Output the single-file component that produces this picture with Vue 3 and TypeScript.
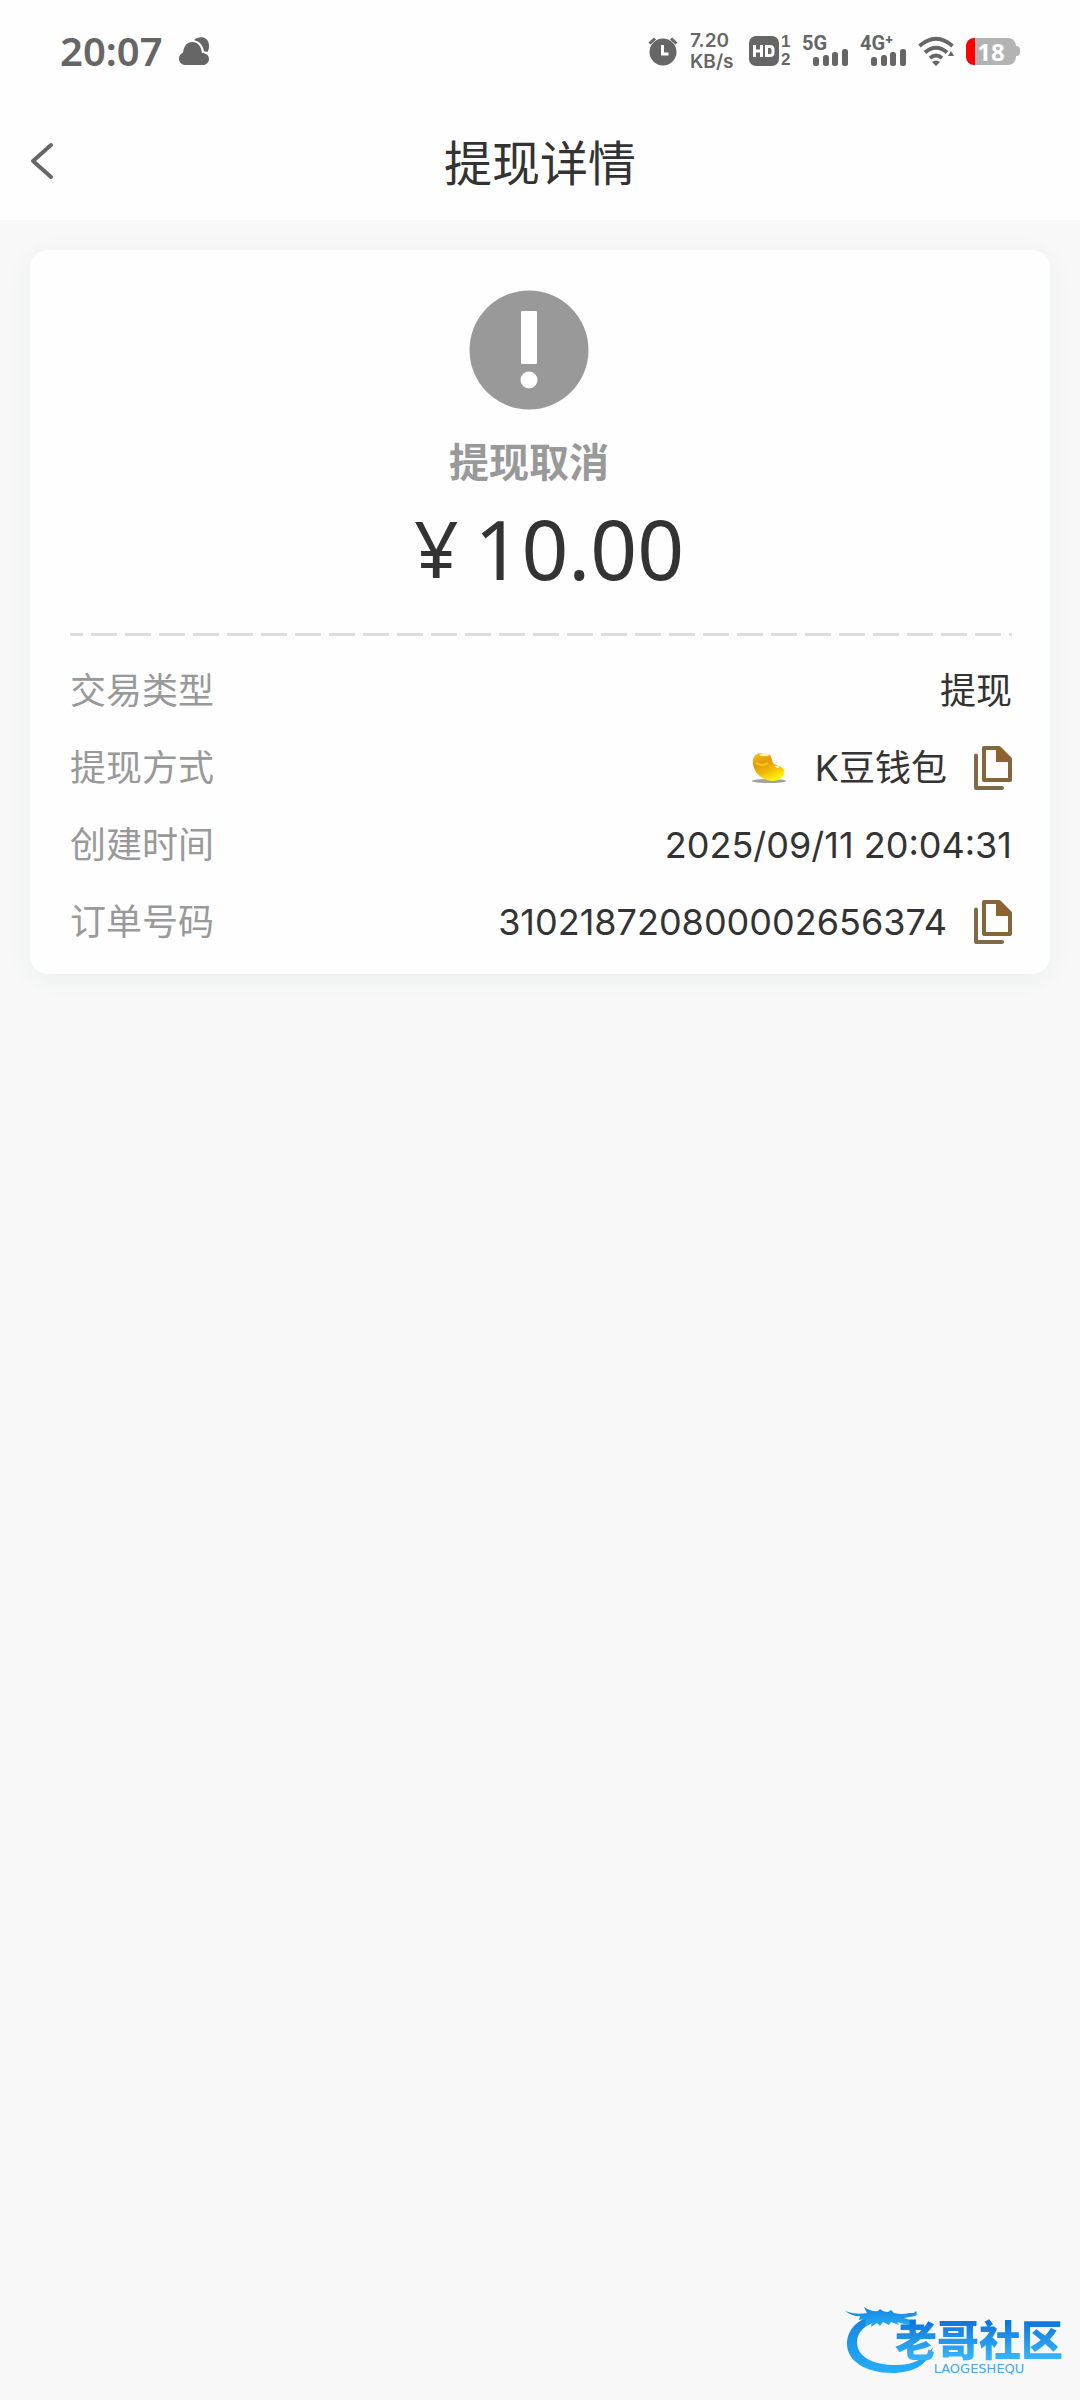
<script setup lang="ts">
import { ref } from 'vue'

interface DetailRow {
  label: string
  value: string
  coin?: boolean
  copy?: boolean
}

const rows: DetailRow[] = [
  { label: '交易类型', value: '提现' },
  { label: '提现方式', value: 'K豆钱包', coin: true, copy: true },
  { label: '创建时间', value: '2025/09/11 20:04:31' },
  { label: '订单号码', value: '310218720800002656374', copy: true },
]

const networks = ref(['5G', '4G⁺'])

function copyValue(value: string) {
  navigator.clipboard?.writeText(value)
}

function goBack() {
  window.history.back()
}
</script>

<template>
  <div class="page">
    <header class="top">
      <div class="status">
        <div class="status-left">
          <span class="clock">20:07</span>
          <svg class="cloud" viewBox="0 0 30 28" aria-hidden="true">
            <path d="M6 28a6 6 0 0 1-6-6.500c0-3 1.500-4.500 4-6C5 9 8 5 13.500 5S22 9 23 16c4 0 7 2.500 7 6s-3 6-6 6z" />
            <path d="M15 3c5-4.500 15-4 15 6 0 2.500-.500 4-1.500 6l-3.500-.700C24 8 20.500 4.500 15 3z" />
          </svg>
        </div>
        <div class="status-right">
          <svg class="alarm" viewBox="0 0 30 30" aria-hidden="true">
            <circle cx="15" cy="16" r="13.500" />
            <path d="M1.500 7.500 7 2.500M28.500 7.500 23 2.500" stroke="#666" stroke-width="3" />
            <path d="M14.500 9v9h6" fill="none" stroke="#fff" stroke-width="3" />
          </svg>
          <span class="speed"><span>7.20</span><span>KB/s</span></span>
          <span class="volte">
            <svg class="hd" viewBox="0 0 30 30" aria-hidden="true">
              <rect width="30" height="30" rx="7" />
              <path d="M5.500 9v12M12.500 9v12M5.500 15h7M17.500 10.500h3.500q3 0 3 3v3q0 3-3 3h-3.500z" fill="none" stroke="#fff" stroke-width="3" />
            </svg>
            <span class="sims"><span>1</span><span>2</span></span>
          </span>
          <span v-for="name in networks" :key="name" class="network">
            <span class="network-name">{{ name }}</span>
            <svg class="bars" viewBox="0 0 35 17" aria-hidden="true">
              <rect x="0" y="8" width="6" height="9" rx="2.500" />
              <rect x="10" y="6" width="6" height="11" rx="2.500" />
              <rect x="19" y="3" width="6" height="14" rx="2.500" />
              <rect x="29" y="0" width="6" height="17" rx="2.500" />
            </svg>
          </span>
          <svg class="wifi" viewBox="0 0 36 30" aria-hidden="true">
            <g fill="none" stroke="#666" stroke-width="4">
              <path d="M1.500 10Q18-4.500 34.500 10" />
              <path d="M7 16.500Q18 7 29 16.500" />
              <path d="M12 22q6-5 12 0" />
            </g>
            <path d="M14 26q4-3 8 0l-4 4zM33 15l3 5h-6z" />
          </svg>
          <span class="battery"><span class="battery-level">18</span></span>
        </div>
      </div>
      <div class="nav">
        <button class="back" type="button" aria-label="返回" @click="goBack">
          <svg viewBox="0 0 24 38" aria-hidden="true">
            <path d="M21 3 3 19l18 16" fill="none" stroke="#666" stroke-width="4" stroke-linecap="round" stroke-linejoin="round" />
          </svg>
        </button>
        <h1>提现详情</h1>
      </div>
    </header>

    <main class="card">
      <section class="summary">
        <svg class="notice" viewBox="0 0 120 120" aria-hidden="true">
          <circle cx="60" cy="60" r="59.500" fill="#999" />
          <rect x="52" y="21" width="16" height="53" rx="1" fill="#fff" />
          <circle cx="60" cy="90" r="8.500" fill="#fff" />
        </svg>
        <p class="state">提现取消</p>
      </section>
      <p class="amount"><span class="yen">¥</span><span>10.00</span></p>
      <div class="divider"></div>
      <dl class="details">
        <div v-for="row in rows" :key="row.label" class="row">
          <dt>{{ row.label }}</dt>
          <dd>
            <svg v-if="row.coin" class="coin" viewBox="0 0 36 32" aria-hidden="true">
              <defs>
                <linearGradient id="bean" x1="0" y1="0" x2="0.500" y2="1">
                  <stop offset="0" stop-color="#f5c21a" />
                  <stop offset="0.400" stop-color="#e39a06" />
                  <stop offset="0.700" stop-color="#f2b708" />
                  <stop offset="1" stop-color="#fff000" />
                </linearGradient>
              </defs>
              <ellipse cx="18" cy="29" rx="17" ry="2" fill="#a0a0a0" />
              <path d="M2 12C1 5 5 1 11 1c7 0 9 2 10 7 1 4 3 5 7 6 6 2 7 7 3 11-4 5-13 5-19 1C6 23 3 18 2 12z" fill="url(#bean)" />
              <path d="M8 3q3 2 6 1 3 1 4-1-2-2-5-2-3 0-5 2zM23 14l3 2 3-1q-3-2-6-1z" fill="#fff6b8" />
              <path d="M5 11q6 4 12 0" fill="none" stroke="#f7c52a" stroke-width="2" />
            </svg>
            <span class="value">{{ row.value }}</span>
            <button v-if="row.copy" class="copy" type="button" :aria-label="'复制' + row.label" @click="copyValue(row.value)">
              <svg viewBox="0 0 38 44" aria-hidden="true">
                <path d="M2 9.500V42H28" fill="none" stroke="#806a48" stroke-width="4" stroke-linejoin="round" stroke-linecap="round" />
                <path d="M10 2h15l11 11v21H10z" fill="none" stroke="#85663b" stroke-width="4" stroke-linejoin="round" />
                <path d="M22 2h4l10 11v3H22z" fill="#8f632f" />
              </svg>
            </button>
          </dd>
        </div>
      </dl>
    </main>

    <footer class="brand">
      <svg class="dragon" viewBox="0 0 90 70" aria-hidden="true">
        <defs>
          <linearGradient id="dragon-fill" x1="0" y1="0" x2="0" y2="1">
            <stop offset="0" stop-color="#1583dc" />
            <stop offset="1" stop-color="#24aefb" />
          </linearGradient>
        </defs>
        <g fill="url(#dragon-fill)">
          <path d="M30 10C12 14 2 25 2 39c0 17 19 29 45 29 22 0 37-9 41-26-8 12-20 18-37 18-23 0-39-8-39-23 0-10 8-18 24-22z" />
          <path d="M0 6q10 4 22 2L19 2q7 5 14 4l2-2q3 3 8 3l3-2 3 3q8 2 15 0h5l2-2q2 4-1 5l-11 2 10 3-2 4-8-1-7-2 2 3-8-3-2 3-6-3-3 4-3-3-6 4 1-5-7 4 1-7-7 1 1-4Q8 12 0 6z" />
        </g>
      </svg>
      <div class="brand-text">
        <span class="brand-name">老哥社区</span>
        <span class="brand-latin">LAOGESHEQU</span>
      </div>
    </footer>
  </div>
</template>

<style>
body {
  background: #f8f8f8;
}
</style>

<style scoped>
.page {
  display: flex;
  flex-direction: column;
  min-height: 100vh;
  background: #f8f8f8;
  color: #333;
  font-family: "Noto Sans", "Noto Sans CJK SC", sans-serif;
}

svg {
  display: block;
  flex: none;
}

button {
  display: block;
  padding: 0;
  border: 0;
  background: none;
  cursor: pointer;
}

.top {
  height: 220px;
  background: #fefefe;
}

.status {
  display: flex;
  justify-content: space-between;
  align-items: center;
  height: 102px;
  padding: 0 60px;
  color: #666;
  fill: #666;
}

.status-left,
.status-right {
  display: flex;
  align-items: center;
}

.status-left {
  gap: 16px;
}

.clock {
  font: 600 40px/40px "Noto Sans", sans-serif;
}

.cloud {
  width: 30px;
  height: 28px;
}

.alarm {
  width: 30px;
  height: 30px;
  margin-right: 12px;
}

.speed {
  display: flex;
  flex-direction: column;
  width: 46px;
  margin-right: 13px;
  font: 600 19px/21px Inter, sans-serif;
}

.volte {
  display: flex;
  align-items: center;
  margin-right: 8px;
}

.hd {
  width: 30px;
  height: 30px;
}

.sims {
  display: flex;
  flex-direction: column;
  width: 13px;
  padding-left: 2px;
  font: 700 17px/18px "Liberation Sans", sans-serif;
}

.network {
  display: flex;
  flex-direction: column;
  width: 46px;
  margin-right: 12px;
}

.network-name {
  height: 13px;
  font: 700 20px/15px Roboto, sans-serif;
}

.bars {
  width: 35px;
  height: 17px;
  align-self: flex-end;
}

.wifi {
  width: 36px;
  height: 30px;
  margin-right: 12px;
}

.battery {
  display: flex;
  align-items: center;
}

.battery::after {
  content: "";
  width: 4px;
  height: 10px;
  border-radius: 0 5px 5px 0;
  background: #b3b3b3;
}

.battery-level {
  width: 50px;
  border-radius: 8px;
  background: linear-gradient(90deg, #f00 9px, #b3b3b3 9px);
  color: #fff;
  font: 700 24px/27px "Noto Sans", sans-serif;
  text-align: center;
}

.nav {
  display: grid;
  grid-template-columns: 60px 1fr 60px;
  align-items: center;
  height: 118px;
  padding: 0 30px;
}

.back svg {
  width: 24px;
  height: 38px;
}

h1 {
  margin: 0;
  padding-top: 4px;
  font-size: 48px;
  font-weight: 400;
  line-height: 64px;
  text-align: center;
}

.card {
  margin: 30px 30px 0;
  padding: 40px 38px 14px 40px;
  border-radius: 18px;
  background: #fefefe;
  box-shadow: 0 4px 24px rgba(30, 60, 60, 0.06);
}

.summary {
  display: flex;
  flex-direction: column;
  align-items: center;
  padding-right: 24px;
}

.notice {
  width: 120px;
  height: 120px;
}

.state {
  margin: 24px 0 0;
  color: #999;
  font-size: 40px;
  font-weight: 700;
  line-height: 56px;
}

.amount {
  display: flex;
  justify-content: center;
  gap: 16px;
  margin: 0;
  padding-left: 16px;
  font-size: 82px;
  line-height: 116px;
}

.yen {
  font-size: 78px;
}

.divider {
  height: 3px;
  margin: 27px 0 16px;
  background: repeating-linear-gradient(90deg, #ddd 0 26px, transparent 26px 34px) -13px 0 / calc(100% + 13px) 3px no-repeat;
}

.details {
  margin: 0;
}

.row {
  display: flex;
  justify-content: space-between;
  align-items: center;
  height: 77px;
}

dt {
  color: #999;
  font-size: 36px;
  line-height: 48px;
}

dd {
  display: flex;
  align-items: center;
  margin: 0;
}

.value {
  font-family: Inter, "Noto Sans CJK SC", sans-serif;
  font-size: 36px;
  line-height: 48px;
}

.coin {
  width: 36px;
  height: 32px;
  margin-right: 28px;
}

.copy {
  margin-left: 27px;
}

.copy svg {
  width: 38px;
  height: 44px;
}

.brand {
  display: flex;
  justify-content: flex-end;
  margin-top: auto;
  padding: 0 17px 24px 0;
}

.dragon {
  width: 90px;
  height: 70px;
}

.brand-text {
  display: flex;
  flex-direction: column;
  align-items: center;
  margin-left: -40px;
  padding-top: 13px;
}

.brand-name {
  background: linear-gradient(#1077dc 10%, #35b4fa 90%);
  background-clip: text;
  color: transparent;
  font-size: 42px;
  font-weight: 900;
  line-height: 44px;
}

.brand-latin {
  color: #4aa6ee;
  font: 13px/14px "DejaVu Sans", sans-serif;
}
</style>
